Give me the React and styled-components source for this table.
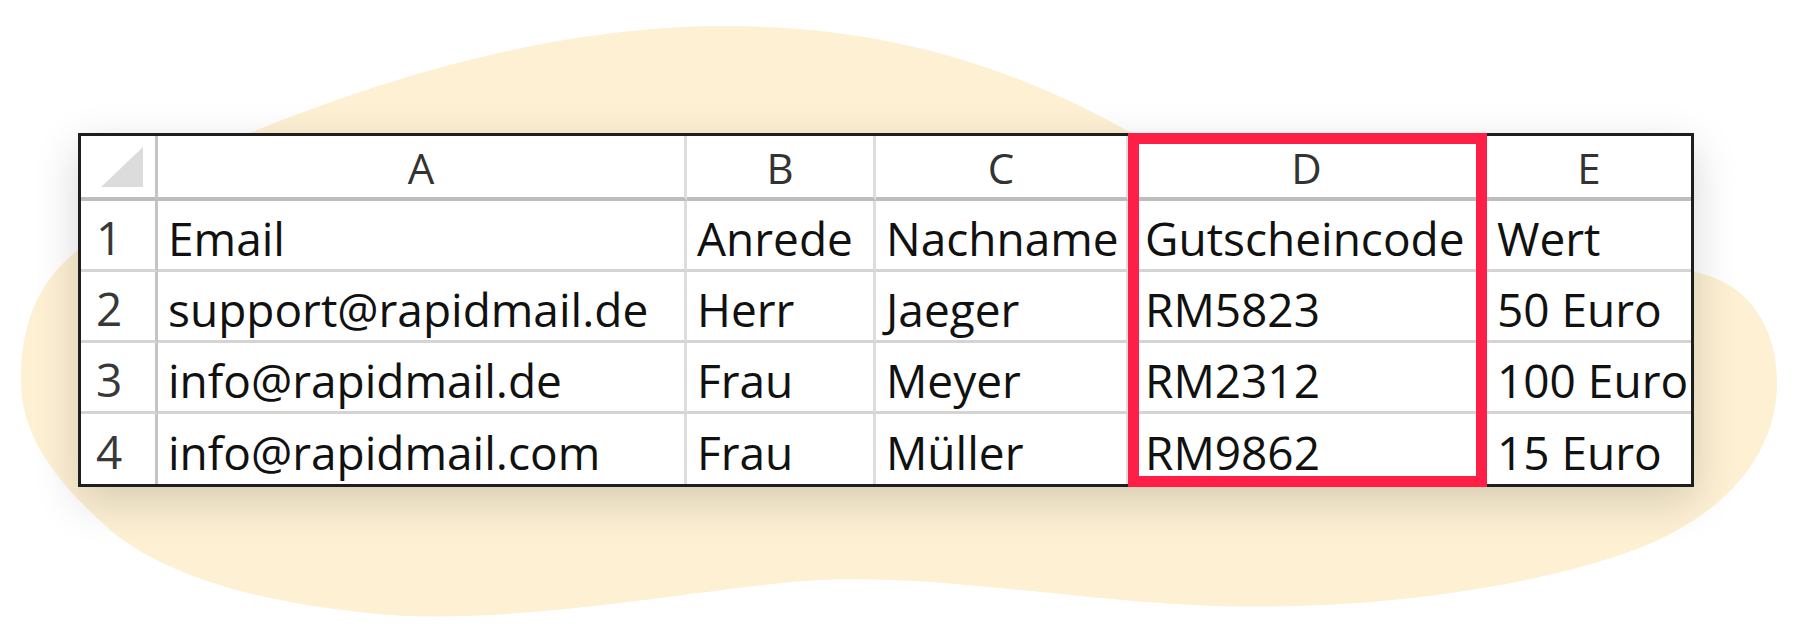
import React from 'react'
import styled, { createGlobalStyle } from 'styled-components'

const GlobalStyle = createGlobalStyle`
    html, body {
        margin: 0;
        padding: 0;
        background: #ffffff;
    }
    * {
        box-sizing: border-box;
    }
`

const Stage = styled.div`
    position: relative;
    width: 1800px;
    height: 641px;
    padding: 133px 0 0 78px;
    overflow: hidden;
    font-family: "Open Sans", "Liberation Sans", sans-serif;
`

const Blob = styled.svg`
    position: absolute;
    inset: 0;
    z-index: 0;
`

const Sheet = styled.div`
    position: relative;
    z-index: 1;
    display: grid;
    grid-template-columns: 77px 529px 189px 253px 358px 204px;
    grid-template-rows: 65px 71px 71px 71px 70px;
    width: 1616px;
    height: 354px;
    background: #ffffff;
    border: 3px solid #1e1e1e;
    box-shadow: 0 14px 42px rgba(0, 0, 0, 0.16);
`

const Corner = styled.div`
    grid-column: 1;
    grid-row: 1;
    display: flex;
    align-items: flex-end;
    justify-content: flex-end;
    padding: 0 12px 10px 0;
    border-right: 3px solid #c4c4c4;
    border-bottom: 4px solid #bdbdbd;
`

const Triangle = styled.div`
    width: 42px;
    height: 40px;
    background: #dcdcdc;
    clip-path: polygon(100% 0, 100% 100%, 0 100%);
`

const ColHead = styled.div`
    grid-column: ${p => p.$col};
    grid-row: 1;
    display: flex;
    align-items: center;
    justify-content: center;
    padding-top: 2px;
    font-size: 42px;
    color: #333333;
    border-bottom: 4px solid #bdbdbd;
    border-right: ${p => (p.$last ? 'none' : '3px solid #dedede')};
`

const RowNum = styled.div`
    grid-column: 1;
    grid-row: ${p => p.$row};
    display: flex;
    align-items: center;
    padding: 4px 0 0 15px;
    font-size: 46px;
    color: #383838;
    border-right: 3px solid #c4c4c4;
    border-bottom: ${p => (p.$last ? 'none' : '3px solid #d4d4d4')};
`

const Cell = styled.div`
    grid-column: ${p => p.$col};
    grid-row: ${p => p.$row};
    display: flex;
    align-items: center;
    padding: 5px 0 0 ${p => p.$pad || 10}px;
    font-size: 46px;
    font-weight: 500;
    color: #111111;
    white-space: nowrap;
    overflow: hidden;
    border-bottom: ${p => (p.$last ? 'none' : '3px solid #d4d4d4')};
    border-right: ${p => (p.$edge ? 'none' : '3px solid #dddddd')};
`

const Highlight = styled.div`
    grid-column: 5;
    grid-row: 1 / -1;
    margin: -3px 0 -3px -1px;
    border: 11px solid #fe1f47;
    z-index: 2;
    pointer-events: none;
`

const columns = ['A', 'B', 'C', 'D', 'E']

const rows = [
    ['Email', 'Anrede', 'Nachname', 'Gutscheincode', 'Wert'],
    ['support@rapidmail.de', 'Herr', 'Jaeger', 'RM5823', '50 Euro'],
    ['info@rapidmail.de', 'Frau', 'Meyer', 'RM2312', '100 Euro'],
    ['info@rapidmail.com', 'Frau', 'Müller', 'RM9862', '15 Euro'],
]

const blobPath = `
    M 726 26
    C 900 26 1030 75 1135 135
    C 1260 210 1420 268 1694 272
    C 1750 282 1778 330 1777 385
    C 1776 455 1725 520 1620 555
    C 1500 595 1340 610 1217 606
    C 1080 602 930 572 804 581
    C 690 590 500 628 367 613
    C 270 603 170 580 110 530
    C 60 485 21 440 21 380
    C 21 320 40 280 78 250
    C 140 200 200 170 250 133
    C 443 54 600 26 726 26
    Z
`

export default function App() {
    return (
        <>
            <GlobalStyle />
            <Stage>
                <Blob width="1800" height="641" viewBox="0 0 1800 641">
                    <path d={blobPath} fill="#fdf0d3" />
                </Blob>
                <Sheet>
                    <Corner>
                        <Triangle />
                    </Corner>
                    {columns.map((c, i) => (
                        <ColHead key={c} $col={i + 2} $last={i === columns.length - 1}>{c}</ColHead>
                    ))}
                    {rows.map((row, r) => (
                        <React.Fragment key={r}>
                            <RowNum $row={r + 2} $last={r === rows.length - 1}>{r + 1}</RowNum>
                            {row.map((val, i) => (
                                <Cell
                                    key={i}
                                    $row={r + 2}
                                    $col={i + 2}
                                    $last={r === rows.length - 1}
                                    $edge={i === row.length - 1}
                                    $pad={i === 3 ? 16 : 10}
                                >
                                    {val}
                                </Cell>
                            ))}
                        </React.Fragment>
                    ))}
                    <Highlight />
                </Sheet>
            </Stage>
        </>
    )
}
